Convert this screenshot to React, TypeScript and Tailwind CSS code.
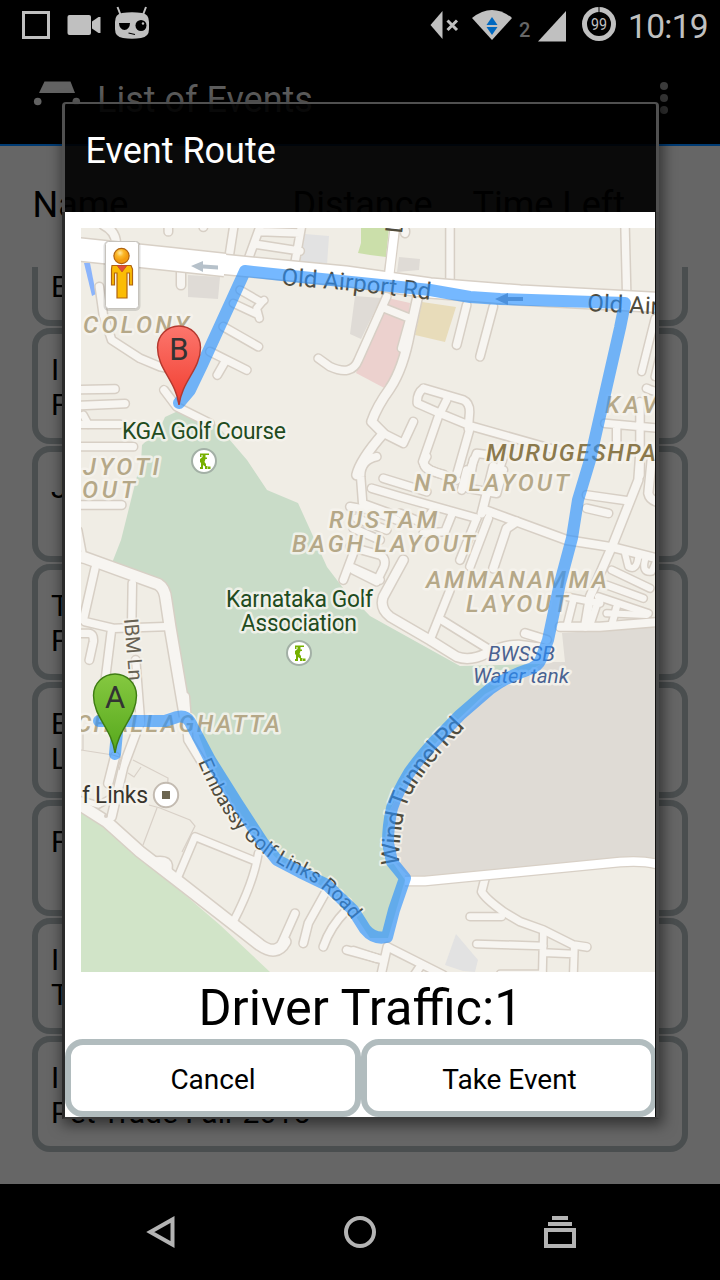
import React from "react";

type Road = [number, string];
type Tile = { x: number; y: number; roads: Road[] };

// Street geometry is stored in survey tiles at three units per pixel.
const tiles: Tile[] = [
  {
    x: 70, y: 215,
    roads: [
      [22, "M88 215L100 300L125 375L210 430L270 455L340 470"],
      [22, "M20 524L135 522M20 572L165 566M20 628L150 628M20 695L190 695"],
      [20, "M40 600L55 628"],
      [22, "M282 525L320 575L420 625"],
      [24, "M333 150V210"],
      [20, "M510 225L575 262L560 280L568 310M575 262L582 256M490 265L565 300"],
      [22, "M460 335L565 395M420 410L530 465M465 440L442 480"],
      [24, "M100 30Q140 50 138 90"],
      [22, "M295 30V50M400 20V36"],
      [22, "M492 30L475 140M572 30L532 140M695 30L672 160M560 88L690 108M572 50L690 54"],
      [22, "M745 430L780 455Q845 485 865 435L950 245"],
    ],
  },
  {
    x: 360, y: 215,
    roads: [
      [22, "M120 40Q140 40 135 55"],
      [22, "M270 30V205M795 30L800 235"],
      [20, "M885 310L845 470M905 400L885 485"],
      [22, "M320 270L290 390M400 275L360 425"],
      [22, "M75 280L150 310L125 400"],
      [26, "M172 250L150 350Q130 460 90 520Q50 575 35 620L70 655Q0 735 -10 780"],
      [22, "M70 655L130 685L160 620"],
      [22, "M190 520L310 555Q332 565 328 600L325 640M190 520Q170 535 172 565L240 595L330 632L640 720"],
      [22, "M260 555L235 605L188 740Q200 770 250 778M330 640L290 780M320 790L350 715L430 725L410 790"],
      [22, "M735 625L900 640M840 560V780M770 640V700"],
      [22, "M860 520Q880 530 900 530"],
      [22, "M735 710L640 720"],
    ],
  },
  {
    x: 70, y: 460,
    roads: [
      [22, "M20 135H155"],
      [32, "M30 290L45 293L265 373Q285 385 288 420L300 500L345 765"],
      [12, "M28 210L42 285"],
      [22, "M75 325L40 480M187 370L185 500M45 485L130 505L285 500M125 505L92 770M30 520H55Q72 520 70 545L58 600M197 600L212 790"],
      [22, "M920 -10Q870 0 872 50L878 130L960 160M850 280L820 360M840 320L930 360"],
    ],
  },
  {
    x: 360, y: 460,
    roads: [
      [22, "M-30 140L30 150L110 180M-10 175L80 210M-20 205L60 240M-30 260L60 285Q80 295 72 320L50 365L-20 330"],
      [26, "M130 300L70 410Q58 445 90 470L210 540L290 590Q330 605 380 580Q430 555 475 555L550 565"],
      [22, "M210 540L270 390M245 480L390 570"],
      [22, "M70 55L200 95M35 85L120 110L350 175M200 -10Q180 20 210 30L290 60M120 160L190 190L220 150"],
      [22, "M275 165L255 215L190 220M350 175L300 300M385 175L330 320M305 90L320 30M340 0L325 85L410 100L430 30"],
      [24, "M375 150L620 240L760 262L910 300M400 20L365 160"],
      [24, "M470 185L440 205L400 325"],
      [22, "M680 105L800 122M680 145L745 160"],
      [24, "M840 -10L835 60L760 250L690 410L675 500"],
      [24, "M875 0L865 100Q870 125 910 130"],
      [24, "M600 500H720L910 485"],
      [24, "M495 520L560 540"],
      [20, "M755 330L870 385M740 375L850 415M715 410L865 460M620 410L720 430M640 420L620 500M770 440L755 495M715 420L690 495"],
      [18, "M795 280L805 320Q830 335 835 290M855 300Q845 340 875 335L890 300M740 460L860 465"],
    ],
  },
  {
    x: 70, y: 700,
    roads: [
      [32, "M15 305L110 365L210 455L320 540L480 665L570 735Q620 770 645 725"],
      [22, "M635 730L675 640"],
      [22, "M245 485Q310 470 290 520"],
      [20, "M320 540L375 410L555 483M565 460Q550 550 490 665"],
      [24, "M205 80L160 200L125 350"],
      [24, "M135 170L115 250"],
      [24, "M345 -10L355 120L410 210"],
      [22, "M765 580L715 670L700 730M830 630Q780 680 760 740M850 752L920 775"],
      [16, "M33 300L85 315L130 290"],
    ],
  },
  {
    x: 360, y: 700,
    roads: [
      [22, "M375 535L365 575Q375 595 430 635L480 665L550 690L640 735L680 741"],
      [20, "M330 650H425M350 732L550 738M550 700L547 830M550 758L640 762M643 740L640 830"],
      [22, "M-40 750L70 780M82 740L62 830M85 742L250 825M180 800L160 830"],
      [16, "M420 820H550"],
    ],
  },
];

function RoadNetwork() {
  return (
    <g fill="none" strokeLinejoin="round" strokeLinecap="round">
      {tiles.map((t, i) => (
        <g key={i} transform={`translate(${t.x} ${t.y}) scale(.33333)`} stroke="#d7cfc5">
          {t.roads.map(([w, d], j) => <path key={j} d={d} strokeWidth={w + 9} />)}
        </g>
      ))}
      {tiles.map((t, i) => (
        <g key={i} transform={`translate(${t.x} ${t.y}) scale(.33333)`} stroke="#f7f5f1">
          {t.roads.map(([w, d], j) => <path key={j} d={d} strokeWidth={w} />)}
        </g>
      ))}
    </g>
  );
}

type LabelProps = { x: number; y: number; w?: number; children: string; fill?: string; size?: number; italic?: boolean; weight?: number };

function Label({ x, y, w, children, fill = "#b5a888", size = 24, italic = false, weight = 400 }: LabelProps) {
  return (
    <text
      x={x} y={y} textLength={w} fontSize={size} fill={fill} fontWeight={weight}
      fontStyle={italic ? "italic" : "normal"}
      stroke="#f6f4ee" strokeOpacity={0.85} strokeWidth={5} strokeLinejoin="round" paintOrder="stroke"
    >
      {children}
    </text>
  );
}

function Pin({ x, y, letter, fill, edge }: { x: number; y: number; letter: string; fill: string; edge: string }) {
  return (
    <g transform={`translate(${x} ${y})`}>
      <path d="M0 0C-3 -24 -21.5 -36 -21.5 -57.5A21.5 21.5 0 0 1 21.5 -57.5C21.5 -36 3 -24 0 0Z" fill={fill} stroke={edge} strokeWidth="1.4" />
      <text x="0" y="-45" textAnchor="middle" fontSize="31" fill="#333">{letter}</text>
    </g>
  );
}

function Golfer({ x, y }: { x: number; y: number }) {
  return (
    <g transform={`translate(${x} ${y})`}>
      <circle r="12" fill="#fff" stroke="#a3b0a6" strokeWidth="2" />
      <path d="M-4 -7.500H5V-6H1.500V-3.500H3V-2H1.500L0.500 1L2 3V5H3.500V8H1V5.500L-1 4V8H-4V6H-3V2L-4 1V-2L-1.500 -4V-6H-2.500V-4H-4ZM4 5.500H6.500V8H4Z" fill="#76b000" />
    </g>
  );
}

function RouteMap() {
  return (
    <svg className="block h-[744px] w-[574px]" viewBox="81 228 574 744" fontFamily="Roboto, sans-serif">
      <defs>
        <linearGradient id="red" x2="0" y2="1"><stop stopColor="#fc766d" /><stop offset="1" stopColor="#f13d2f" /></linearGradient>
        <linearGradient id="green" x2="0" y2="1"><stop stopColor="#85c840" /><stop offset="1" stopColor="#56a81c" /></linearGradient>
        <radialGradient id="head" cx=".4" cy=".3"><stop stopColor="#ffe9a0" /><stop offset=".5" stopColor="#fbb829" /><stop offset="1" stopColor="#f39c10" /></radialGradient>
        <path id="airport" d="M281 285L345 290L440 301" />
        <path id="airport2" d="M587 311L670 315" />
        <path id="ibm" d="M124 619L130 690" />
        <path id="embassy" d="M198 762C211 793 223 813 236 828C256 851 276 864 296 873C322 885 342 905 358 928" />
        <path id="wind" d="M399 866C400 817 406 799 420 780C432 761 449 744 468 724" />
      </defs>
      <rect x="81" y="228" width="574" height="744" fill="#f0ede5" />

      <path d="M178 411L165 417L160 428L142 445L141 462L136 480L121 540L112 563L167 584L175 640L190 712L210 765L245 825L280 862L320 885L355 915L370 938L388 938L405 880L384 850L390 810L410 772L450 727L485 694L541 664L460 666L370 616L343 588L327 567L298 503L267 490L247 460L217 425Z" fill="#c9dcc8" />
      <path d="M562 633L655 627V858L627 857L410 878L388 855L390 810L412 772L450 730L485 697L545 662H565Z" fill="#dfdbd5" />
      <path d="M81 813L107 825L137 855L177 888L220 925L270 972H81Z" fill="#d1e4c8" />
      <path d="M188 275L220 277L218 299L188 297ZM399 257L420 259L419 270L397 272ZM355 296L381 298L361 339L350 334Z" fill="#dfdbd6" />
      <path d="M305 234L329 236L327 265L300 263ZM456 934L478 960L475 972L463 971L445 965Z" fill="#e2e2e2" />
      <path d="M361 228H389L386 257L370 255L358 253L361 243Z" fill="#cbdfaa" />
      <path d="M388 298L410 303L407 328L402 355L388 390L356 373Z" fill="#ecd1ce" />
      <path d="M422 302L456 307L445 342L415 335Z" fill="#e8dcba" />
      <path d="M84 263H90L96 294L92 296Z" fill="#8bb4fb" />

      <RoadNetwork />

      <g fill="none" stroke="#d8d0c7" strokeWidth="1.2">
        <path d="M81 750L113 755L122 758L119 770M83 728V750M133 760L168 778L167 797M141 767L134 777L128 773M157 808L143 845M149 805L160 808L190 820L195 826L182 852" />
      </g>
      <circle cx="106" cy="816" r="2" fill="#d8d0c7" />

      <g fill="none" strokeLinejoin="round">
        <path d="M395 228L388 282" stroke="#d8d0c6" strokeWidth="11" />
        <path d="M75 249L170 259L225 265" stroke="#d8d0c6" strokeWidth="25" />
        <path d="M220 264L345 276L430 288L520 295L670 303" stroke="#d8d0c6" strokeWidth="22" />
        <path d="M395 226L388 285" stroke="#fff" strokeWidth="8.500" />
        <path d="M75 249L170 259L225 265" stroke="#fff" strokeWidth="22" />
        <path d="M220 264L345 276L430 288L520 295L670 303" stroke="#fff" strokeWidth="19" />
        <path d="M405 881H425L620 862Q645 860 660 865" stroke="#d8d0c6" strokeWidth="11" />
        <path d="M405 881H425L620 862Q645 860 660 865" stroke="#fff" strokeWidth="8.500" />
      </g>
      <path d="M191 266L203 261V264.500L218 265.500V269.500L203 268.500V272Z" fill="#b6c1ca" />

      <Label x={83} y={333} w={106} italic weight={500}>COLONY</Label>
      <Label x={83} y={475} w={76} italic weight={500}>JYOTI</Label>
      <Label x={82} y={498} w={53} italic weight={500}>OUT</Label>
      <Label x={329} y={527.5} w={108} italic weight={500}>RUSTAM</Label>
      <Label x={292} y={551.5} w={183} italic weight={500}>BAGH LAYOUT</Label>
      <Label x={414} y={491} w={155} italic weight={500}>N R LAYOUT</Label>
      <Label x={605} y={412.5} w={52} italic weight={500}>KAV</Label>
      <Label x={486} y={460.5} w={170} italic weight={500} fill="#8b794c">MURUGESHPA</Label>
      <Label x={426} y={588} w={181} italic weight={500}>AMMANAMMA</Label>
      <Label x={466} y={612} w={102} italic weight={500}>LAYOUT</Label>
      <Label x={76} y={732} w={204} italic weight={500}>CHALLAGHATTA</Label>
      <Label x={488} y={661} w={67} size={21} italic fill="#4a6291">BWSSB</Label>
      <Label x={473} y={683} w={96} size={21} italic fill="#4a6291">Water tank</Label>
      <Label x={122} y={439} w={164} size={23} fill="#214b20">KGA Golf Course</Label>
      <Label x={226} y={607} w={147} size={23} fill="#214b20">Karnataka Golf</Label>
      <Label x={241} y={631} w={116} size={23} fill="#214b20">Association</Label>
      <Label x={82} y={803} w={66} size={23} fill="#37342d">f Links</Label>

      <g fill="#504c3d" fontSize="24" stroke="#f6f4ee" strokeOpacity=".8" strokeWidth="4" strokeLinejoin="round" paintOrder="stroke">
        <text stroke="none" textLength="150"><textPath href="#airport">Old Airport Rd</textPath></text>
        <text stroke="none"><textPath href="#airport2">Old Air</textPath></text>
        <text stroke="none" transform="translate(402 234) rotate(-84)" fontSize="24">L</text>
        <text fontSize="20" fill="#686253"><textPath href="#ibm">IBM Ln</textPath></text>
        <text fontSize="20"><textPath href="#embassy" textLength="226">Embassy Golf Links Road</textPath></text>
        <text fontSize="25"><textPath href="#wind" textLength="160">Wind Tunnel Rd</textPath></text>
      </g>

      <g opacity=".64" fill="none" stroke="#2790ff" strokeWidth="12" strokeLinejoin="round" strokeLinecap="round">
        <path d="M179 403L190 390L202 365L245 271L282 275L430 290L470 297L500 299L625 303L620 328L607 385L590 460L578 500L572 538L560 583L548 640L541 659Q538 667 527 670Q506 677 490 689L460 715L433 743Q418 760 409 773Q397 793 392 808Q388 825 388 843L392 862L405 878L394 910L387 937Q374 940 365 929L353 910L327 885L300 872L277 860L263 843L237 803L210 760L190 722Q186 715 177 717L165 721H99M118 721L115 754" />
      </g>
      <path d="M495 299L508 293V297H523V301H508V305Z" fill="#4d91dc" />

      <Golfer x={204} y={461} />
      <Golfer x={299} y={653} />
      <circle cx="166" cy="795" r="12.200" fill="#fff" stroke="#c3bbb1" strokeWidth="2" />
      <rect x="162" y="791" width="8" height="8" fill="#6c6651" />

      <Pin x={179} y={405} letter="B" fill="url(#red)" edge="#b3382e" />
      <Pin x={115} y={753} letter="A" fill="url(#green)" edge="#3e7c13" />

      <rect x="103.500" y="241" width="37" height="70" rx="5" fill="#000" opacity=".12" />
      <rect x="105.500" y="241.500" width="33" height="67" rx="3" fill="#fff" stroke="#c6c3bd" />
      <path d="M112 265.500H131L132.500 269V285H129.500V273H127V298H117V273H114.500V285H111.500V269Z" fill="#fbbc05" stroke="#b06410" strokeWidth="1.200" />
      <path d="M117 265.500H127L122 272Z" fill="#e04b3c" stroke="#b8471b" strokeWidth=".6" />
      <circle cx="121.500" cy="256" r="7.600" fill="url(#head)" stroke="#b06410" strokeWidth="1.200" />
    </svg>
  );
}

function StatusBar() {
  return (
    <div className="flex h-[50px] items-start justify-between bg-black">
      <svg className="h-[50px] w-[160px]" viewBox="0 0 160 50" fill="#c0c0c0">
        <rect x="23.500" y="12.500" width="25" height="25" fill="none" stroke="#c0c0c0" strokeWidth="3" />
        <rect x="67.500" y="15" width="23.500" height="20" rx="2" />
        <path d="M92 21.500L98.500 17H100.500V33H98.500L92 28.500Z" />
        <path d="M117.500 7L121 16M146 7L142.500 16" stroke="#c0c0c0" strokeWidth="2" />
        <path d="M115 22Q115 14 122 13Q132 11.500 142 13Q149 14 149 22V29Q149 37 141 38Q132 39.500 123 38Q115 37 115 29Z" />
        <path d="M119 23H130A5.500 7 0 0 1 119 23Z" fill="#000" />
        <circle cx="141" cy="25.500" r="5.500" fill="#000" /><circle cx="143" cy="23.500" r="1.200" />
        <path d="M128.500 33L135 34.500" stroke="#000" strokeWidth="1.200" />
      </svg>
      <div className="flex items-start">
        <svg className="h-[50px] w-[200px]" viewBox="426 0 200 50" fill="#c0c0c0" fontFamily="Roboto, sans-serif">
          <path d="M430.500 25L442.500 11V39Z" />
          <path d="M447.500 20.500L457 30M457 20.500L447.500 30" stroke="#c0c0c0" strokeWidth="3" />
          <path d="M472 18Q492 2 512 18L492 40Z" />
          <path d="M486.500 25L492 17L497.500 25ZM486.500 27L492 35L497.500 27Z" fill="#0068c0" />
          <text x="519" y="36.500" fontSize="20" fill="#666" fontWeight="500">2</text>
          <path d="M538 41.500L566 11V41.500Z" />
          <circle cx="599" cy="24" r="14.500" fill="none" stroke="#c0c0c0" strokeWidth="5" />
          <path d="M599 7V12.500" stroke="#000" strokeWidth="1" />
          <text x="599" y="30" fontSize="17" textAnchor="middle" textLength="16" lengthAdjust="spacingAndGlyphs">99</text>
        </svg>
        <div className="w-[94px] pl-[2px] pt-[6px] text-[33.5px] leading-[42px] tracking-[-0.7px] text-[#c0c0c0]">10:19</div>
      </div>
    </div>
  );
}

function ActionBar() {
  return (
    <div className="flex h-[96px] items-center border-b-2 border-[#003b73] bg-black">
      <svg className="h-[94px] w-[97px] shrink-0" viewBox="0 50 97 94" fill="#626262">
        <path d="M44.500 81.500H70.500L75 93H39Z" />
        <circle cx="37.700" cy="101.500" r="3.800" /><circle cx="76.300" cy="101.500" r="3.800" />
      </svg>
      <div className="grow pt-[5px] text-[36px] leading-[44px] text-[#5c5c5c]">List of Events</div>
      <div className="mr-[52px] flex flex-col gap-[4px] pt-[2px]">
        <div className="size-[8px] rounded-full bg-[#3b3b3b]" />
        <div className="size-[8px] rounded-full bg-[#333]" />
        <div className="size-[8px] rounded-full bg-[#2d2d2d]" />
      </div>
    </div>
  );
}

const events: string[][] = [["", "E"], ["I", "F"], ["J"], ["T", "F"], ["E", "L"], ["F"], ["I", "T"], ["I", "Pet Trade Fair 2015"]];

function EventList() {
  return (
    <div className="flex h-[917px] flex-col justify-end gap-[2px] overflow-hidden px-8 pb-8">
      {events.map((lines, i) => (
        <div key={i} className="h-[116px] shrink-0 rounded-[18px] border-[6px] border-[#4a4e4f] pl-[13px] pt-[18px] text-[30px] leading-[35px] text-black">
          {lines.map((line, j) => <div key={j} className="h-[35px]">{line}</div>)}
        </div>
      ))}
    </div>
  );
}

function NavBar() {
  return (
    <div className="flex h-24 items-center justify-between bg-black px-[140px]">
      <svg className="size-10" viewBox="0 0 40 40" fill="none" stroke="#b4b4b4" strokeWidth="4">
        <path d="M10.300 20L32.500 7.500V32.500Z" />
      </svg>
      <svg className="size-10" viewBox="0 0 40 40" fill="none" stroke="#b4b4b4" strokeWidth="4">
        <circle cx="20" cy="20" r="14" />
      </svg>
      <svg className="size-10" viewBox="0 0 40 40" fill="#b4b4b4">
        <path d="M12 4H28V8H12ZM8 10H32V14H8Z" />
        <rect x="6" y="18" width="28" height="16" fill="none" stroke="#b4b4b4" strokeWidth="4" />
      </svg>
    </div>
  );
}

function RouteDialog() {
  return (
    <div className="absolute left-[62px] top-[102px] flex h-[1017px] w-[597px] flex-col rounded-t-[4px] shadow-[2px_4px_14px_2px_rgba(0,0,0,0.5)]">
      <div className="h-[110px] shrink-0 rounded-t-[4px] border-x-[3px] border-t-2 border-[#505050] bg-black/90 pl-[20.500px] pt-[25px] text-[36px] leading-[44px] text-white">
        Event Route
      </div>
      <div className="flex grow flex-col border-b-2 border-l-[3px] border-r-[3px] border-b-[#3b3b3b] border-l-[#2a2a2a] border-r-[#474747] bg-[#111]">
        <div className="flex h-[905px] w-[590px] flex-col overflow-hidden bg-white">
          <div className="pl-4 pt-4"><RouteMap /></div>
          <div className="h-[67px] pl-px pt-[5px] text-center text-[50.5px] leading-[62px] text-black">Driver Traffic:1</div>
          <div className="flex">
            <button className="h-[78px] w-[296px] shrink-0 rounded-[18px] border-[6px] border-[#b1bcbe] bg-white pt-[3px] text-[28px] text-black">Cancel</button>
            <button className="h-[78px] w-[296px] shrink-0 rounded-[18px] border-[6px] border-[#b1bcbe] bg-white pl-px pt-[3px] text-[28px] text-black">Take Event</button>
          </div>
        </div>
      </div>
    </div>
  );
}

export default function App() {
  return (
    <div className="relative flex h-[1280px] w-[720px] flex-col overflow-hidden bg-[#666] font-['Roboto',sans-serif]">
      <StatusBar />
      <ActionBar />
      <div className="grid h-[121px] grid-cols-[260px_180px_1fr] pl-[32.500px] pt-[37px] text-[36px] leading-[44px] text-black">
        <div>Name</div>
        <div>Distance</div>
        <div>Time Left</div>
      </div>
      <EventList />
      <NavBar />
      <RouteDialog />
    </div>
  );
}
